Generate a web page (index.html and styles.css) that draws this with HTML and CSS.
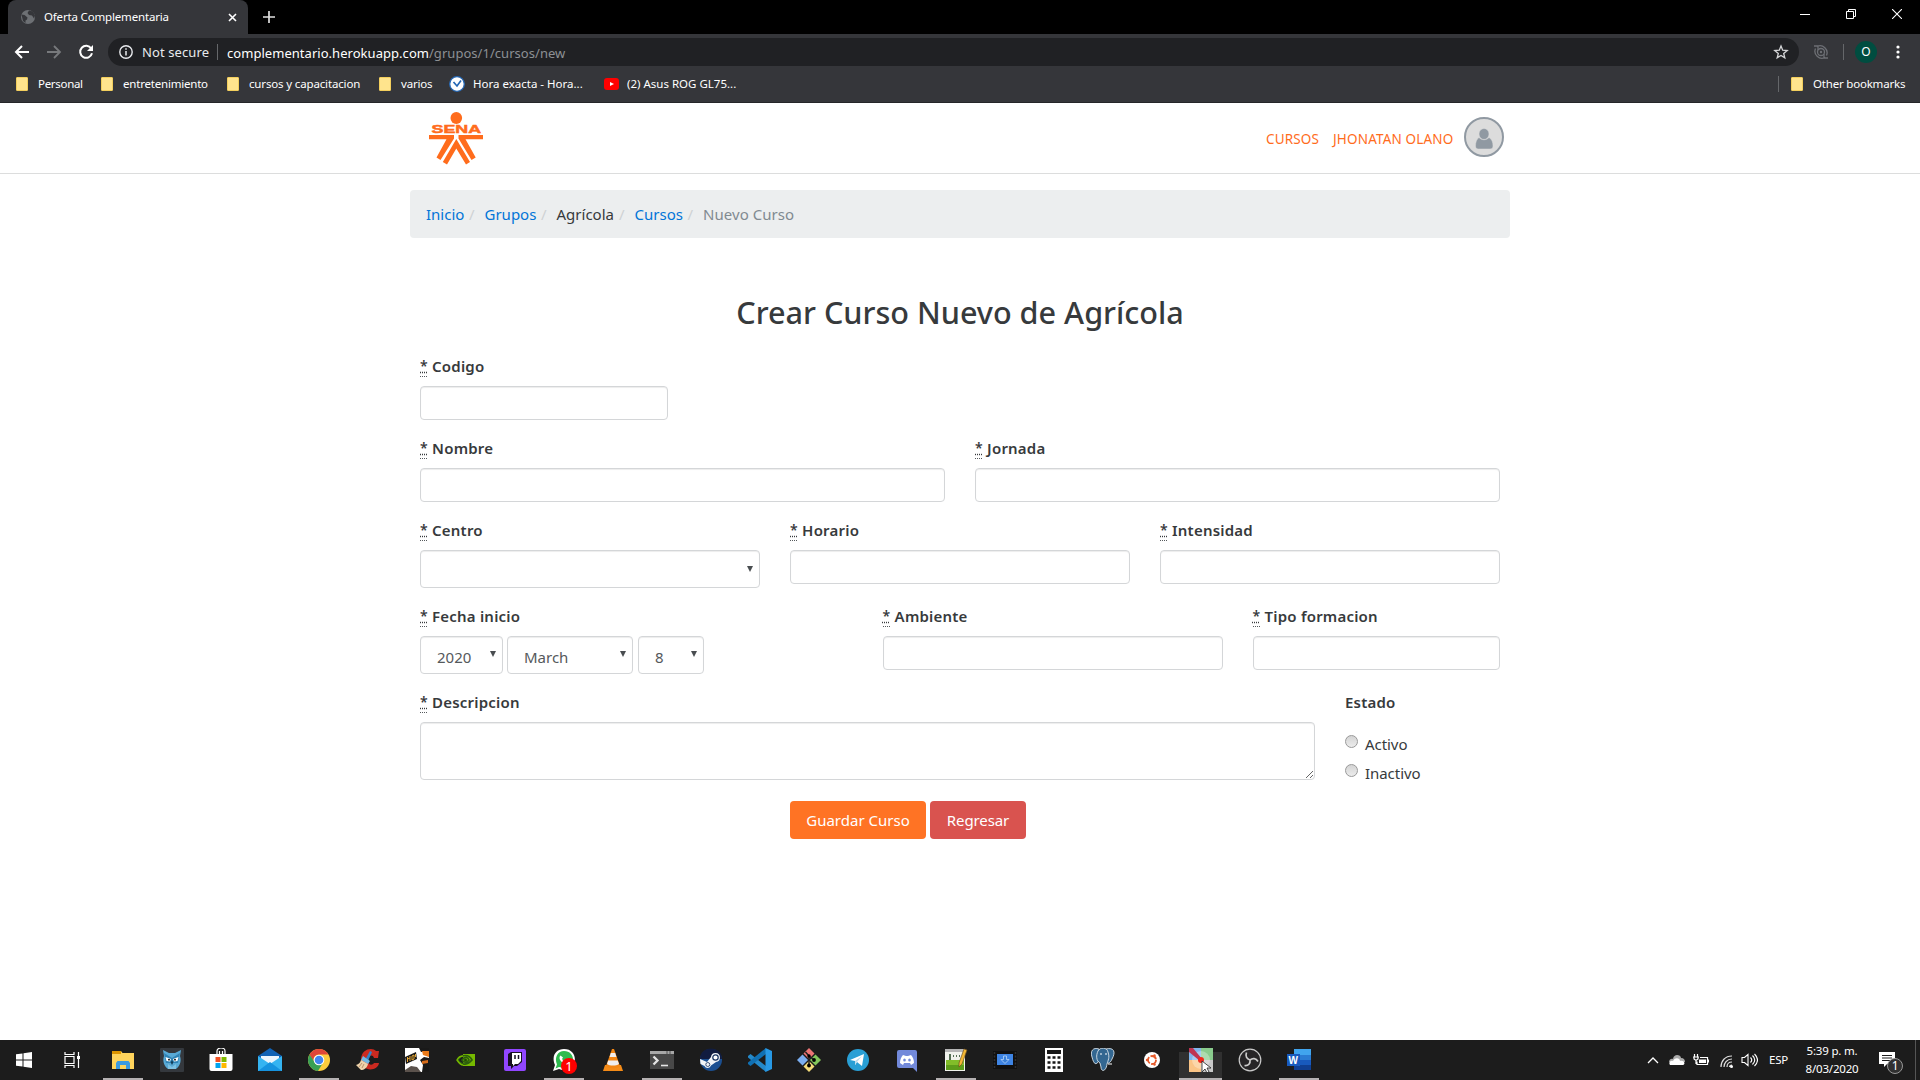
FILE: index.html
```html
<!DOCTYPE html>
<html lang="es">
<head>
<meta charset="utf-8">
<title>Oferta Complementaria</title>
<link rel="stylesheet" href="styles.css">
</head>
<body>
<div class="desktop">
  <div class="tabstrip">
    <div class="tab">
      <svg class="tab-icon" viewBox="0 0 16 16"><circle cx="8" cy="8" r="7" fill="#6d7074"/><path d="M1.500 5.500l3 .5 3 2.500-.5 2-1.500 1V14l-2.500-2zM9 1.500L7.500 4 9 6l3 .5 2 3 1-3-2-4z" fill="#35363a"/></svg>
      <span class="tab-title">Oferta Complementaria</span>
      <svg class="tab-close" viewBox="0 0 9 9"><path d="M1 1l7 7M8 1l-7 7" stroke="#fff" stroke-width="1.6"/></svg>
    </div>
    <svg class="new-tab" viewBox="0 0 12 12"><path d="M6 0v12M0 6h12" stroke="#e0e0e0" stroke-width="1.7"/></svg>
    <div class="window-buttons">
      <svg viewBox="0 0 10 10"><path d="M0 5.5h10" stroke="#fff"/></svg>
      <svg viewBox="0 0 10 10"><path d="M.5 2.5h7v7h-7zM2.5 2.5v-2h7v7h-2" fill="none" stroke="#fff"/></svg>
      <svg viewBox="0 0 10 10"><path d="M0 0l10 10M10 0L0 10" stroke="#fff" stroke-width="1.1"/></svg>
    </div>
  </div>
  <div class="toolbar">
    <svg class="nav-icon" viewBox="0 0 16 16"><path d="M15 8H2.500M8 2L2 8l6 6" fill="none" stroke="#fff" stroke-width="2"/></svg>
    <svg class="nav-icon" viewBox="0 0 16 16"><path d="M1 8h12.500M8 2l6 6-6 6" fill="none" stroke="#77797c" stroke-width="1.800"/></svg>
    <svg class="nav-icon" viewBox="0 0 16 16"><path d="M13.200 4.500A6 6 0 1 0 14 9.300" fill="none" stroke="#fff" stroke-width="2"/><path d="M15 1v6H9z" fill="#fff"/></svg>
    <div class="omnibox">
      <svg class="info-icon" viewBox="0 0 14 14"><circle cx="7" cy="7" r="6.200" fill="none" stroke="#e8eaed" stroke-width="1.400"/><path d="M7 6v4.500M7 3.300v1.500" stroke="#e8eaed" stroke-width="1.500"/></svg>
      <span class="not-secure">Not secure</span>
      <span class="url"><span class="host">complementario.herokuapp.com</span><span class="path">/grupos/1/cursos/new</span></span>
      <svg class="star" viewBox="0 0 16 16"><path d="M8 2l1.700 4.200 4.500.3-3.500 2.900 1.100 4.400L8 11.400l-3.800 2.400 1.100-4.400-3.500-2.900 4.500-.3z" fill="none" stroke="#d5d6d8" stroke-width="1.300"/></svg>
    </div>
    <svg class="extension" viewBox="0 0 16 16"><g fill="none" stroke="#6d6f74" stroke-width="1.300"><path d="M4 2.500a7 7 0 0 1 9.500 9M12 13.500a7 7 0 0 1-9.500-9M1 2h4v4M15 14h-4v-4"/><circle cx="8" cy="8" r="3.500"/></g><circle cx="8" cy="8" r="1.200" fill="#6d6f74"/></svg>
    <span class="bar-divider"></span>
    <span class="profile">O</span>
    <svg class="menu-dots" viewBox="0 0 4 14"><g fill="#fff"><circle cx="2" cy="2" r="1.600"/><circle cx="2" cy="7" r="1.600"/><circle cx="2" cy="12" r="1.600"/></g></svg>
  </div>
  <div class="bookmarks">
    <span class="bookmark b-personal"><i class="folder"></i>Personal</span>
    <span class="bookmark b-entre"><i class="folder"></i>entretenimiento</span>
    <span class="bookmark b-cursos"><i class="folder"></i>cursos y capacitacion</span>
    <span class="bookmark b-varios"><i class="folder"></i>varios</span>
    <span class="bookmark b-hora"><svg class="clock" viewBox="0 0 16 16"><circle cx="8" cy="8" r="7.300" fill="#fff" stroke="#2467b5" stroke-width="1.300"/><path d="M4.500 6L8 10l4-5.500" fill="none" stroke="#2467b5" stroke-width="1.700"/></svg>Hora exacta - Hora...</span>
    <span class="bookmark b-video"><svg class="video" viewBox="0 0 15 12"><rect width="15" height="12" rx="3" fill="#f00"/><path d="M6 4l4 2-4 2z" fill="#fff"/></svg>(2) Asus ROG GL75...</span>
    <span class="bookmark-other"><span class="bookmark"><i class="folder"></i>Other bookmarks</span></span>
  </div>

  <main class="page">
    <header class="site-header">
      <div class="header-inner">
        <svg class="logo" viewBox="0 0 54 53"><g fill="#ff6c1c"><ellipse cx="27.300" cy="6" rx="5.800" ry="6"/><text x="2.500" y="21.300" font-size="11.500" font-weight="bold" textLength="49.500" lengthAdjust="spacingAndGlyphs" class="logo-text">SENA</text><path d="M0 23h25v3.500L11.500 48 7.500 45.500 17.500 27.300H0zM54 23H29.500v3.500L42.500 48l4.200-2.500L36.500 27.300H54zM27.300 27L41 50 37 52.500 27.300 36.500 18 52.500 13.800 50z"/></g></svg>
        <nav class="user-nav">
          <a class="nav-courses">CURSOS</a><a class="nav-user">JHONATAN OLANO</a>
          <svg class="avatar" viewBox="0 0 40 40"><circle cx="20" cy="20" r="19" fill="#dcdcdc" stroke="#9099a2" stroke-width="2"/><path d="M20 11.500a5 5.500 0 0 1 0 11 5 5.500 0 0 1 0-11zM15 20.500c3 3 7 3 10 0 3 1.500 4 5 4 8.500 0 2-1 3-3 3H14.500c-2 0-3-1-3-3 0-3.500 1-7 3.500-8.500z" fill="#9099a2" stroke="#dcdcdc" stroke-width=".5"/></svg>
        </nav>
      </div>
    </header>
    <div class="container">
      <ol class="breadcrumb"><li class="c1"><a>Inicio</a></li><li class="c2"><a>Grupos</a></li><li class="c3">Agrícola</li><li class="c4"><a>Cursos</a></li><li class="c5">Nuevo Curso</li></ol>
      <h2 class="title"><span>Crear Curso Nuevo de Agrícola</span></h2>
      <form class="course-form">
        <div class="row"><div class="field col-3"><label><abbr>*</abbr> Codigo</label><input type="text"></div></div>
        <div class="row">
          <div class="field col-6"><label><abbr>*</abbr> Nombre</label><input type="text"></div>
          <div class="field col-6"><label><abbr>*</abbr> Jornada</label><input type="text"></div>
        </div>
        <div class="row">
          <div class="field col-4"><label><abbr>*</abbr> Centro</label><span class="select"><select><option></option></select></span></div>
          <div class="field col-4"><label><abbr>*</abbr> Horario</label><input type="text"></div>
          <div class="field col-4"><label><abbr>*</abbr> Intensidad</label><input type="text"></div>
        </div>
        <div class="row">
          <div class="field col-5"><label><abbr>*</abbr> Fecha inicio</label>
            <div class="date">
              <span class="select date-select year"><select><option>2020</option></select></span>
              <span class="select date-select month"><select><option>March</option></select></span>
              <span class="select date-select day"><select><option>8</option></select></span>
            </div>
          </div>
          <div class="field col-4"><label><abbr>*</abbr> Ambiente</label><input type="text"></div>
          <div class="field col-3"><label><abbr>*</abbr> Tipo formacion</label><input type="text"></div>
        </div>
        <div class="row">
          <div class="field col-10"><label><abbr>*</abbr> Descripcion</label><textarea></textarea></div>
          <div class="field col-2"><label>Estado</label>
            <span class="radio"><i class="dot"></i>Activo</span>
            <span class="radio"><i class="dot"></i>Inactivo</span>
          </div>
        </div>
        <div class="actions"><button type="button" class="btn save">Guardar Curso</button><button type="button" class="btn back">Regresar</button></div>
      </form>
    </div>
  </main>

  <footer class="taskbar">
    <span class="slot start"><svg class="ico-s" viewBox="0 0 16 16"><path d="M0 2.300L6.500 1.400V7.500H0zM7.500 1.200L16 0v7.500H7.500zM0 8.500h6.500v6.100L0 13.700zM7.500 8.500H16V16l-8.500-1.200z" fill="#fff"/></svg></span>
    <span class="slot view"><svg class="ico-s" viewBox="0 0 16 16"><path d="M1 0v2.500h9V0M1 16v-2.500h9V16M1 4.500h9v7H1zM14.500 0v16" fill="none" stroke="#fff" stroke-width="1.200"/><path d="M13 4h3v3h-3z" fill="#fff"/></svg></span>
    <span class="slot run"><svg viewBox="0 0 24 24"><path d="M1 3h9l1.500 2H23v16H1z" fill="#ffd45c"/><path d="M1 3h9v3H1z" fill="#dd9500"/><path d="M5 21v-6l1.500-2h11l1.500 2v6h-4v-4H9v4z" fill="#3c9be0"/></svg></span>
    <span class="slot"><svg viewBox="0 0 24 24"><rect width="24" height="24" rx="1" fill="#34383d"/><path d="M3 2l6 3h6l6-3-1 6c2 6-1 11-4 13H8C5 19 2 14 4 8z" fill="#58a9d5"/><path d="M4 5l8 5 8-5-2 10H6z" fill="#2f83b5"/><path d="M5.500 9l5.500 2-1 2.500-3.500-.5zM18.500 9L13 11l1 2.500 3.500-.5z" fill="#fff"/><circle cx="9" cy="11.700" r=".9"/><circle cx="15" cy="11.700" r=".9"/><path d="M12 12l-1.300 2.500L12 17l1.300-2.500z" fill="#103d59"/><path d="M8 16l4 3 4-3v5H8z" fill="#7ec1e2"/></svg></span>
    <span class="slot"><svg viewBox="0 0 24 24"><path d="M8 7V3c0-4 8-4 8 0v4M10.500 6V3M13.500 6V3" fill="none" stroke="#fff" stroke-width="1.200"/><path d="M.5 6h23v15a2 2 0 0 1-2 2h-19a2 2 0 0 1-2-2z" fill="#fff"/><path d="M6.500 9h5v5h-5z" fill="#f25022"/><path d="M12.500 9h5v5h-5z" fill="#7fba00"/><path d="M6.500 15h5v5h-5z" fill="#00a4ef"/><path d="M12.500 15h5v5h-5z" fill="#ffb900"/></svg></span>
    <span class="slot"><svg viewBox="0 0 24 24"><path d="M0 8l12-8 12 8v4H0z" fill="#0f62b5"/><path d="M3 8h18v10H3z" fill="#eaf5fd"/><path d="M0 8l12 8 12-8v15H0z" fill="#35b4f1"/><path d="M0 23l12-9 12 9z" fill="#1693df"/></svg></span>
    <span class="slot run"><svg viewBox="0 0 24 24"><circle cx="12" cy="12" r="11" fill="#fbcc3d"/><path d="M2.500 6.500A11 11 0 0 1 21.500 6.500H12A5.500 5.500 0 0 0 6.800 14z" fill="#df4638"/><path d="M2.500 6.500A11 11 0 0 0 11 23l5.200-8.500a5 5 0 0 1-9-1z" fill="#38a055"/><circle cx="12" cy="12" r="5.300" fill="#fff"/><circle cx="12" cy="12" r="4.300" fill="#4286ef"/></svg></span>
    <span class="slot"><svg viewBox="0 0 24 24"><path d="M23 3l-1 7h-4c-1-4-6-3-6 2s4 6 6 3h5c-1 9-18 9-18-3C5 0 17-1 20 3z" fill="#cb2a20"/><path d="M14 3l2 1-4 9-3-1z" fill="#3083c8"/><path d="M7 8l7 5-2 3-7-4z" fill="#72b9e4"/><path d="M5 12l7 4c-1 4-4 6-7 6L0 17c3-1 4-2 5-5z" fill="#eed4ac"/><path d="M3 19l3-4M6 20l2-4" stroke="#a7734d" stroke-width=".7"/></svg></span>
    <span class="slot"><svg viewBox="0 0 24 24"><rect width="24" height="24" fill="#fff"/><path d="M0 9l11-5 1 7-11 5z" fill="#171717"/><path d="M2.500 9v5M5 8v5M2.500 11L5 10M7 8l2-1v4l-2 1zM10.500 6v3" fill="none" stroke="#e6a733"/><path d="M14 0h10v3l-8 1z" fill="#191919"/><path d="M17 3h7v6l-6-2z" fill="#e87919"/><path d="M15 12l4-3 5 1v14h-7l1-7z" fill="#191919"/><path d="M17 13l6-1v3l-6 1z" fill="#d56c1b"/><path d="M0 22l6-4 6 1 4 5H0z" fill="#5b524c"/></svg></span>
    <span class="slot"><svg viewBox="0 0 24 24"><path d="M9 6h12v12H9z" fill="#76b900"/><path d="M4 12c4-6 11-6 14 0-4 5-10 6-14 0zm4 0c3-4 6-3 7 0-2 3-5 3-7 0z" fill="none" stroke="#2c5e0d" stroke-width="1.700"/><path d="M9 8c-3 0-5 2-6 4 2 3 4 5 6 5" fill="none" stroke="#76b900" stroke-width="1.500"/><circle cx="11.500" cy="12" r="1.500" fill="#214d08"/></svg></span>
    <span class="slot"><svg viewBox="0 0 24 24"><rect x="1" y="1" width="22" height="22" rx="2" fill="#9146ff"/><path d="M5 6l3-2h11v10l-5 4h-3l-3 3v-3H5z" fill="#171020"/><path d="M9 5h9v8l-3 3h-3l-2 2v-2H9z" fill="#fff"/><path d="M12 7v4M15.500 7v4" stroke="#171020" stroke-width="1.500"/></svg></span>
    <span class="slot run"><svg viewBox="0 0 24 24"><path d="M1 23l2-6C-1 8 4 1 12 1c15 0 14 21 0 21-2 0-4-.5-5-1z" fill="#fff"/><path d="M3.500 20.500L5 16.500C2 9 6 3 12 3c12 0 12 17 0 17-2 0-3-.5-5-1z" fill="#2dbb4e"/><path d="M8.500 7.500c-4 4 5 11 8 8l-2-2.500-2 1-2.500-3 1-1.500z" fill="#fff"/></svg><b class="badge">1</b></span>
    <span class="slot"><svg viewBox="0 0 24 24"><path d="M4 17h16l2 6H2z" fill="#f58b17"/><path d="M11 1h2l6 17c-2 3-12 3-14 0z" fill="#f28614"/><path d="M9.800 5h4.400l1.200 4H8.600zM7.200 12.500h9.600L18 16c-3 2-9 2-12 0z" fill="#f0eeee"/></svg></span>
    <span class="slot run"><svg viewBox="0 0 24 24"><path d="M0 3h24v18H0z" fill="#484848"/><path d="M0 3h24v3H0z" fill="#a8a8a8"/><path d="M17 3v3M20 3v3" stroke="#555"/><path d="M3.500 8.500l4 4-4 4" fill="none" stroke="#e4e4e4" stroke-width="2.300"/><path d="M11 17.500h7" stroke="#e4e4e4" stroke-width="1.600"/></svg></span>
    <span class="slot"><svg viewBox="0 0 24 24"><circle cx="12" cy="12" r="11" fill="#1b4f91"/><path d="M1 11C1-3 23-3 23 11z" fill="#111c40"/><path d="M1 11l7 3 4-5a4.500 4.500 0 1 1 5 5l-5 3.500a3.500 3.500 0 0 1-6.500.5L1.500 16z" fill="#f2f5f8"/><circle cx="16.500" cy="9.500" r="2.700" fill="#fff" stroke="#16305e" stroke-width="1.200"/><circle cx="8.800" cy="16.500" r="2" fill="none" stroke="#16305e" stroke-width=".8"/></svg></span>
    <span class="slot"><svg viewBox="0 0 24 24"><path d="M0 8l2.500-2L18 18v6L0 9.500z" fill="#2489ca"/><path d="M0 16l2.500 2L18 6V0L0 14.500z" fill="#1070b3"/><path d="M17.500 0L24 3v18l-6.500 3z" fill="#2899e5"/></svg></span>
    <span class="slot"><svg viewBox="0 0 24 24"><path d="M12 0l5.500 5.500L12 11 6.500 5.500z" fill="#ec7575"/><path d="M5.500 6.500L11 12l-5.500 5.500L0 12z" fill="#7baef0"/><path d="M18.500 6.500L24 12l-5.500 5.500L13 12z" fill="#83c65b"/><path d="M12 13l5.500 5.500L12 24l-5.500-5.500z" fill="#f4db79"/><path d="M8.500 4l3.500 4v9M12 8l5 4" fill="none" stroke="#222" stroke-width="1.500"/><circle cx="12" cy="8" r="1.700"/><circle cx="12" cy="17.500" r="1.900"/><circle cx="17" cy="12" r="1.900"/></svg></span>
    <span class="slot"><svg viewBox="0 0 24 24"><circle cx="12" cy="12" r="11" fill="#299fd5"/><path d="M4 12l14-6-2 12-5-4-2 3v-4z" fill="#fff"/><path d="M9 13l7-5-5 6-2 3z" fill="#bddced"/></svg></span>
    <span class="slot"><svg viewBox="0 0 24 24"><path d="M4 2h16a2 2 0 0 1 2 2v20l-4-4H4a2 2 0 0 1-2-2V4a2 2 0 0 1 2-2z" fill="#7289da"/><path d="M8 7l3 1h2l3-1c2 2 3 5 3 8l-3 2-1-2H9l-1 2-3-2c0-3 1-6 3-8z" fill="#fff"/><ellipse cx="9.500" cy="12" rx="1.300" ry="1.500" fill="#7289da"/><ellipse cx="14.500" cy="12" rx="1.300" ry="1.500" fill="#7289da"/></svg></span>
    <span class="slot run"><svg viewBox="0 0 24 24"><path d="M1 1h20v22H1z" fill="#f1f3ed"/><path d="M1 1h20v3H1z" fill="#b5b5b5"/><path d="M2 12h18v10H2z" fill="#82bd29"/><path d="M2 17h18v5H2z" fill="#5d9c1a"/><path d="M6 6v6M9 8h1M12 8h1M15 8h1" stroke="#242" stroke-width="1.500"/><path d="M20 1l3 1-5 14-3 3v-4z" fill="#f2b735" stroke="#715221" stroke-width=".7"/></svg></span>
    <span class="slot"><svg viewBox="0 0 24 24"><path d="M0 3h24v18H0z" fill="#101010"/><path d="M1.500 4v16M22.500 4v16" stroke="#303030" stroke-width="1.500" stroke-dasharray="2 1.500"/><path d="M4 6h16v11H4z" fill="#3e84e3"/><path d="M10.500 8h3v3.500h2.500l-4 4-4-4h2.500z" fill="#387fd8" stroke="#b8d4f8" stroke-width=".8"/></svg></span>
    <span class="slot"><svg viewBox="0 0 24 24"><path d="M3 0h18v24H3z" fill="#fff"/><path d="M5 2h14v4H5z" fill="#171717"/><path d="M5.500 9.500h14M5.500 14.500h14M5.500 19.500h14" stroke="#171717" stroke-width="2.500" stroke-dasharray="3 2"/></svg></span>
    <span class="slot"><svg viewBox="0 0 24 24"><g fill="#336791" stroke="#d9e3ea" stroke-width=".9"><path d="M8 1C2-1-1 3 1 9c2 8 4 8 7 4z"/><path d="M15 1c8-2 10 3 6 10-2 5-5 5-7 2z"/><path d="M7 3c2-4 9-4 10 1 2 6 0 8-1 12-1 8-6 8-6 3l-1-4C5 13 5 7 7 3z"/></g><path d="M10 5v2M15 5v2M17 16h4" stroke="#fff"/></svg></span>
    <span class="slot"><svg viewBox="0 0 24 24"><circle cx="12" cy="12" r="8" fill="#fff"/><circle cx="12" cy="12" r="4" fill="none" stroke="#e65a2a" stroke-width="1.800" stroke-dasharray="7 1.400"/><circle cx="7" cy="12" r="1.200" fill="#e65a2a"/><circle cx="14.500" cy="7.500" r="1.200" fill="#e65a2a"/><circle cx="14.500" cy="16.500" r="1.200" fill="#e65a2a"/></svg></span>
    <span class="slot run active"><svg viewBox="0 0 24 24"><path d="M0 0h12v12H0z" fill="#81b7ed"/><path d="M12 0h12v12H12z" fill="#8acc8d"/><path d="M0 12h12v12H0z" fill="#fac486"/><path d="M12 12h12v12H12z" fill="#c9c9c9"/><circle cx="12" cy="12" r="9" fill="#fff" opacity=".3"/><path d="M0 0h4l9 11-2 2L0 4z" fill="#bf3553"/><circle cx="12" cy="12" r="3" fill="#f2291e"/><path d="M13 13v11l3-3 2 4 2-1-2-4h4z" fill="#fff" stroke="#222" stroke-width=".8"/></svg></span>
    <span class="slot"><svg viewBox="0 0 24 24"><circle cx="12" cy="12" r="10.800" fill="#272527" stroke="#c9c9c9" stroke-width="1.200"/><path d="M8.500 4.500c-1.500 4 .5 6.500 3.500 7.500M20 13.500c-2-3.500-5.500-3.500-8-1.500M6.500 17.500c4 .5 6-2 5.500-5.500" fill="none" stroke="#ccc" stroke-width="1.700"/></svg></span>
    <span class="slot run"><svg viewBox="0 0 24 24"><path d="M7 1h17v6H7z" fill="#41a5ee"/><path d="M7 7h17v5H7z" fill="#2b7cd3"/><path d="M7 12h17v5H7z" fill="#185abd"/><path d="M7 17h17v5H7z" fill="#103f91"/><path d="M0 6h13v12H0z" fill="#185abd"/><text x="1.500" y="15.500" font-size="10" font-weight="bold" fill="#fff" class="word-text">W</text></svg></span>
    <div class="tray">
      <svg class="caret-up" viewBox="0 0 12 8"><path d="M1 7l5-5 5 5" fill="none" stroke="#fff" stroke-width="1.300"/></svg>
      <svg class="cloud" viewBox="0 0 16 11"><path d="M0 7C0 4 3 3 4 4c1-6 8-4 8-1 3 0 4 2 4 4z" fill="#aaa"/><path d="M1 10c-2-3 1-5 3-4 2-4 7-3 7 0 4-1 6 3 3 4z" fill="#fff"/></svg>
      <svg class="battery" viewBox="0 0 16 12"><path d="M7 3.500h7.500v7H4v-3M15.500 5.500v3M1.500 0v3M4.500 0v3M0 3h6M1 3v2l2 1.500L5 5V3M3 6v4" fill="none" stroke="#fff" stroke-width="1.200"/><path d="M6 5.500h7v3.500H6z" fill="#fff"/></svg>
      <svg class="wifi" viewBox="0 0 13 13"><path d="M1 12C1 6 5 1 12 1M4 12c0-4 3-8 8-8M7 12c0-3 2-5 5-5M9.500 12a2.500 2 0 0 1 2.500-2" fill="none" stroke="#ddd" stroke-width="1.200"/><circle cx="11.500" cy="11.500" r="1.500" fill="#fff"/></svg>
      <svg class="speaker" viewBox="0 0 17 14"><path d="M1 4.500h2.500L7 1.500v11L3.500 9.500H1zM9.500 4.500c1.500 1.500 1.500 3.500 0 5M11.500 2.500c3 3 3 6 0 9M13.500 1c4 4 4 8 0 12" fill="none" stroke="#fff" stroke-width="1.100"/></svg>
      <span class="lang">ESP</span>
      <span class="datetime"><span class="time">5:39 p. m.</span><span class="day-text">8/03/2020</span></span>
      <span class="notice"><svg viewBox="0 0 16 16"><path d="M0 0h16v12H8l-3 3v-3H0z" fill="#fff"/><path d="M3 3.500h10M3 6h10M3 8.500h8" stroke="#1c1c1c" stroke-width="1.100"/></svg><b class="count">1</b></span>
    </div>
  </footer>
</div>
</body>
</html>
```
FILE: styles.css
```css
* { box-sizing: border-box; }
body { margin: 0; background: #fff; font-family: "Noto Sans", "Open Sans", sans-serif; font-size: 15px; line-height: 24px; color: #373a3c; overflow: hidden; }
svg { display: block; flex: none; }
.desktop { width: 1920px; height: 1080px; display: flex; flex-direction: column; }

/* browser chrome */
.tabstrip { height: 34px; background: #000; display: flex; align-items: center; padding-left: 8px; flex: none; }
.tab { width: 240px; height: 34px; background: #35363a; border-radius: 8px 8px 0 0; display: flex; align-items: center; padding-left: 12px; }
.tab-icon { width: 16px; height: 16px; margin-right: 8px; }
.tab-title { width: 184px; font-size: 11.5px; letter-spacing: -.17px; color: #fff; white-space: nowrap; }
.tab-close { width: 9px; height: 9px; }
.new-tab { width: 12px; height: 12px; margin-left: 15px; }
.window-buttons { margin-left: auto; display: flex; gap: 36px; margin-right: 18px; padding-bottom: 6px; }
.window-buttons svg { width: 10px; height: 10px; }
.toolbar { height: 36px; background: #35363a; display: flex; align-items: center; padding-left: 14px; flex: none; }
.nav-icon { width: 16px; height: 16px; margin-right: 16px; }
.omnibox { width: 1691px; height: 28px; margin-left: -2px; border-radius: 14px; background: #202124; display: flex; align-items: center; padding: 0 10px 0 11px; font-size: 13px; color: #e8eaed; white-space: nowrap; }
.info-icon { width: 14px; height: 14px; margin-right: 9px; }
.not-secure { width: 76px; height: 16px; line-height: 16px; border-right: 1px solid #65676a; margin-right: 9px; letter-spacing: .1px; }
.host { color: #fff; }
.path { color: #8d9094; }
.url { letter-spacing: .04px; padding-top: 1px; }
.star { width: 16px; height: 16px; margin-left: auto; }
.extension { width: 16px; height: 16px; margin-left: 14px; }
.bar-divider { width: 1px; height: 16px; background: #65676a; margin-left: 14px; }
.profile { width: 22px; height: 22px; border-radius: 50%; background: #004d40; color: #fff; font-size: 12px; line-height: 22px; text-align: center; margin-left: 11px; }
.menu-dots { width: 4px; height: 14px; margin-left: 19px; }
.bookmarks { height: 33px; background: #35363a; border-bottom: 1px solid #252629; display: flex; align-items: center; padding: 0 0 5px 16px; font-size: 11.5px; letter-spacing: -.2px; color: #fff; flex: none; }
.bookmark { display: flex; align-items: center; white-space: nowrap; line-height: 16px; }
.b-personal { width: 85px; letter-spacing: -.3px; }
.b-entre { width: 126px; }
.b-cursos { width: 152px; letter-spacing: -.15px; }
.b-varios { width: 70px; }
.b-hora { width: 155px; letter-spacing: 0; }
.b-video { letter-spacing: 0; }
.folder { width: 12px; height: 14px; margin-right: 10px; background: #ffe48d; border: 1px solid #f3cf5d; border-radius: 1px; flex: none; }
.clock { width: 16px; height: 16px; margin-right: 8px; }
.video { width: 15px; height: 12px; margin-right: 8px; }
.bookmark-other { margin-left: auto; width: 142px; height: 16px; border-left: 1px solid #65676a; padding-left: 12px; }

/* site */
.page { flex: 1; min-height: 0; background: #fff; }
.site-header { height: 71px; border-bottom: 1px solid #dcdddd; }
.header-inner { width: 1100px; height: 70px; margin: 0 auto; padding: 9px 6px 0 19px; display: flex; align-items: flex-start; }
.logo { width: 54px; height: 53px; }
.logo-text, .word-text { font-family: "Liberation Sans", Arial, sans-serif; }
.logo-text { stroke: #ff6c1c; stroke-width: .5; }
.user-nav { margin-left: auto; display: flex; align-items: flex-start; padding-top: 5px; font-size: 13.500px; letter-spacing: .16px; color: #ff6c1c; white-space: nowrap; }
.user-nav a { padding-top: 10px; }
.nav-courses { width: 67px; }
.nav-user { width: 131px; }
.avatar { width: 40px; height: 40px; }
.container { width: 1100px; margin: 16px auto 0; }
.breadcrumb { list-style: none; margin: 0; height: 48px; padding: 12px 16px; display: flex; background: #eceeef; border-radius: 4px; white-space: nowrap; }
.breadcrumb li + li::before { content: "/"; color: #cfd2d4; display: inline-block; width: 15.5px; }
.breadcrumb a { color: #0275d8; }
.c1 { width: 43px; }
.c2 { width: 72px; }
.c3 { width: 78px; }
.c4 { width: 68.5px; }
.c5 { color: #818a91; letter-spacing: .05px; }
.title { margin: 55px 0 0; height: 61px; font-size: 30.6px; line-height: 38px; font-weight: 500; text-align: center; white-space: nowrap; }
.course-form { width: 1110px; margin-left: -5px; }
.row { display: flex; margin-bottom: 16px; }
.field { padding: 0 15px; display: flex; flex-direction: column; }
.col-2 { width: 185px; }
.col-3 { width: 277.5px; }
.col-4 { width: 370px; }
.col-5 { width: 462.5px; }
.col-6 { width: 555px; }
.col-10 { width: 925px; }
label { font-weight: 600; height: 24px; margin-bottom: 8px; letter-spacing: .2px; }
abbr { display: inline-block; width: 7px; height: 23px; border-bottom: 1px dotted #55595c; text-decoration: underline dotted; margin-right: 1px; vertical-align: top; letter-spacing: 0; font-size: 14px; }
input, select, textarea { display: block; width: 100%; height: 34px; border: 1px solid #d4d6d8; border-radius: 4px; background: #fff; box-shadow: inset 0 1px 1px rgba(0, 0, 0, .075); margin: 0; padding: 0; font: inherit; color: #55595c; }
select { appearance: none; height: 38px; }
.select { display: block; position: relative; }
.select::after { content: ""; position: absolute; right: 7px; top: 16px; border: 3px solid transparent; border-top: 6px solid #494d50; border-bottom: 0; }
.date { display: flex; gap: 4px; }
.date-select select { padding: 3px 0 0 16px; }
.date-select::after { top: 15px; }
.year { width: 83px; }
.month { width: 126px; }
.day { width: 66px; margin-left: 1px; }
textarea { height: 58px; }
.radio { display: flex; height: 29px; padding-top: 10px; line-height: 24px; letter-spacing: -.05px; }
.dot { width: 13px; height: 13px; margin: 3px 7px 0 0; border-radius: 50%; border: 1px solid #999; background: linear-gradient(#d4d4d4, #ececec); }
.actions { display: flex; gap: 4px; padding: 5px 0 0 385px; }
.btn { height: 38px; border: 0; border-radius: 4px; padding: 0; font: inherit; color: #fff; }
.save { width: 136px; background: #ff7324; }
.back { width: 96px; background: #d9534f; letter-spacing: -.1px; }

/* taskbar */
.taskbar { height: 40px; background: #1c1c1c; display: flex; flex: none; color: #fff; }
.slot { width: 49px; height: 40px; padding-top: 8px; display: flex; justify-content: center; position: relative; }
.slot svg { width: 24px; height: 24px; }
.start { width: 48px; }
.view { width: 50px; padding-right: 3px; }
.slot .ico-s { width: 16px; height: 16px; margin-top: 4px; }
.run::after { content: ""; position: absolute; left: 5px; bottom: 0; width: 40px; height: 2px; background: #b5b1b2; }
.active { background: linear-gradient(#1c1c1c 12px, #303030 12px); background-clip: content-box; padding: 0 3px; }
.active svg { margin-top: 8px; }
.active::after { left: 3px; width: 43px; }
.badge { position: absolute; left: 22px; top: 18px; width: 16px; height: 16px; border-radius: 50%; background: #f00; font-size: 13px; line-height: 16px; text-align: center; font-weight: 400; }
.tray { margin-left: auto; width: 273px; display: flex; align-items: center; font-size: 11.5px; letter-spacing: -.2px; line-height: 18px; }
.caret-up { width: 12px; height: 8px; }
.cloud { width: 16px; height: 11px; margin-left: 10px; }
.battery { width: 16px; height: 12px; margin-left: 8px; }
.wifi { width: 13px; height: 13px; margin-left: 11px; margin-top: 2px; }
.speaker { width: 17px; height: 14px; margin-left: 8px; }
.lang { width: 32px; margin-left: 11px; }
.datetime { display: flex; flex-direction: column; align-items: center; width: 62px; }
.notice { position: relative; margin-left: 16px; width: 16px; height: 16px; }
.notice svg { width: 16px; height: 16px; }
.count { position: absolute; left: 8px; top: 6px; width: 16px; height: 16px; border-radius: 50%; background: #303030; border: 1px solid #999; font-size: 12px; line-height: 14px; text-align: center; font-weight: 400; }
.tray::after { content: ""; width: 1px; height: 40px; margin-left: 20px; background: #555; }
```
